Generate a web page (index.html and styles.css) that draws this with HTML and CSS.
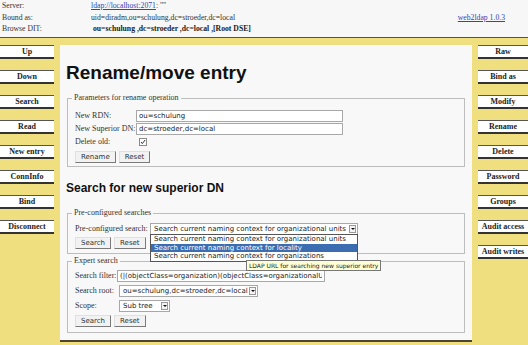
FILE: index.html
```html
<!DOCTYPE html>
<html lang="en">
<head>
    <meta charset="UTF-8">
    <title>web2ldap - Rename/move entry</title>
    <link rel="stylesheet" href="styles.css">
</head>
<body>
    <div class="top">
        <div class="info">
            <span>Server:</span>
            <span><a href="#">ldap://localhost:2071</a>: ""</span>
            <span>Bound as:</span>
            <span>uid=diradm,ou=schulung,dc=stroeder,dc=local</span>
            <span>Browse DIT:</span>
            <span class="dit">ou=schulung ,dc=stroeder ,dc=local ,[Root DSE]</span>
        </div>
        <a class="version" href="#">web2ldap 1.0.3</a>
    </div>

    <div class="layout">
        <div class="nav">
            <a href="#">Up</a>
            <a href="#">Down</a>
            <a href="#">Search</a>
            <a href="#">Read</a>
            <a href="#">New entry</a>
            <a href="#">ConnInfo</a>
            <a href="#">Bind</a>
            <a href="#">Disconnect</a>
        </div>

        <div class="main">
            <h1>Rename/move entry</h1>

            <fieldset class="fs rename">
                <legend>Parameters for rename operation</legend>
                <div class="row first">
                    <label>New RDN:</label>
                    <input class="field" type="text" value="ou=schulung">
                </div>
                <div class="row">
                    <label>New Superior DN:</label>
                    <input class="field" type="text" value="dc=stroeder,dc=local">
                </div>
                <div class="row">
                    <label>Delete old:</label>
                    <svg class="check" width="8" height="8" viewBox="0 0 8 8">
                        <rect x="0.5" y="0.5" width="7" height="7" fill="#fff" stroke="#8a8a8a"/>
                        <path d="M2 4 L3.3 5.6 L6.2 2" fill="none" stroke="#333" stroke-width="1"/>
                    </svg>
                </div>
                <div class="btns">
                    <button>Rename</button>
                    <button>Reset</button>
                </div>
            </fieldset>

            <h2>Search for new superior DN</h2>

            <fieldset class="fs pre">
                <legend>Pre-configured searches</legend>
                <div class="row first">
                    <label>Pre-configured search:</label>
                    <div class="select wide">
                        <span class="val">Search current naming context for organizational units</span>
                        <span class="arrow"></span>
                        <div class="dropdown">
                            <div>Search current naming context for organizational units</div>
                            <div class="hl">Search current naming context for locality</div>
                            <div>Search current naming context for organizations</div>
                        </div>
                        <div class="tip">LDAP URL for searching new superior entry</div>
                    </div>
                </div>
                <div class="btns">
                    <button>Search</button>
                    <button>Reset</button>
                </div>
            </fieldset>

            <fieldset class="fs expert">
                <legend>Expert search</legend>
                <div class="row first">
                    <label>Search filter:</label>
                    <input class="field" type="text" value="(|(objectClass=organization)(objectClass=organizationalUnit))">
                </div>
                <div class="row">
                    <label>Search root:</label>
                    <div class="select root">
                        <span class="val">ou=schulung,dc=stroeder,dc=local</span>
                        <span class="arrow"></span>
                    </div>
                </div>
                <div class="row">
                    <label>Scope:</label>
                    <div class="select scope">
                        <span class="val">Sub tree</span>
                        <span class="arrow"></span>
                    </div>
                </div>
                <div class="btns">
                    <button>Search</button>
                    <button>Reset</button>
                </div>
            </fieldset>
        </div>

        <div class="nav right">
            <a href="#">Raw</a>
            <a href="#">Bind as</a>
            <a href="#">Modify</a>
            <a href="#">Rename</a>
            <a href="#">Delete</a>
            <a href="#">Password</a>
            <a href="#">Groups</a>
            <a href="#">Audit access</a>
            <a href="#">Audit writes</a>
        </div>
    </div>
</body>
</html>
```

FILE: styles.css
```css
body {
    margin: 0;
    height: 345px;
    overflow: hidden;
    background-color: #efdf7e;
    font-family: "Liberation Serif", serif;
    color: #333;
}
a {
    color: #3344bb;
}

/* header */
.top {
    display: flex;
    justify-content: space-between;
    height: 37px;
    background-color: #f7f7f7;
    border-bottom: 1px solid #5b5337;
}
.info {
    display: grid;
    grid-template-columns: 89px auto;
    grid-auto-rows: 11.5px;
    padding-left: 2px;
    font-size: 7.7px;
    line-height: 11.5px;
}
.dit {
    padding-left: 2px;
    font-weight: bold;
    color: #222;
}
.version {
    margin: 11.5px 23px 0 0;
    font-size: 7.7px;
    line-height: 11.5px;
}

/* three columns */
.layout {
    display: flex;
    gap: 6px;
    padding-top: 7px;
}
.nav {
    width: 54px;
    display: flex;
    flex-direction: column;
    gap: 11px;
}
.nav.right {
    width: 50px;
}
.nav a {
    display: block;
    height: 11px;
    background-color: #fff;
    border-top: 1px solid #555;
    border-bottom: 2px solid #333;
    font: bold 8px/11px "Liberation Serif", serif;
    color: #222;
    text-align: center;
    text-decoration: none;
    white-space: nowrap;
}
.main {
    box-sizing: border-box;
    width: 412px;
    height: 297px;
    padding: 0 7px 0 6px;
    background-color: #f8f8f8;
    border-bottom: 2px solid #4c4631;
}
h1 {
    margin: 17px 0 0;
    font: bold 19px/22px "Liberation Sans", Arial, sans-serif;
    color: #111;
}
h2 {
    margin: 14px 0 0;
    font: bold 12px/14px "Liberation Sans", Arial, sans-serif;
    color: #111;
}

/* forms */
.fs {
    margin: 9px 0 0 1px;
    padding: 0 0 3px 7px;
    border: 1px solid #bdbdbd;
    font-size: 8px;
}
.fs legend {
    margin-left: -3px;
    padding: 0 2px;
    font-size: 8px;
    line-height: 10px;
}
.pre {
    margin-top: 13px;
    padding-bottom: 4px;
}
.expert {
    margin-top: 2px;
    padding-bottom: 5px;
}
.row {
    display: flex;
    align-items: center;
    height: 12px;
    margin-top: 1px;
}
.row.first {
    margin-top: 7px;
}
.pre .row.first {
    margin-top: 5px;
}
.expert .row {
    margin-top: 3px;
}
.expert .row.first {
    margin-top: 4px;
}
.row label {
    flex: none;
    line-height: 12px;
    white-space: nowrap;
}
.rename label {
    width: 61px;
}
.pre label {
    width: 75px;
}
.expert label {
    width: 42px;
}
.field {
    box-sizing: border-box;
    width: 207px;
    height: 12px;
    margin: 0;
    padding: 0 2px;
    border: 1px solid #a8a8a8;
    background-color: #fff;
    font: 7px "DejaVu Sans", sans-serif;
    color: #222;
}
.expert .field {
    width: 208px;
}
.check {
    margin-left: 3px;
}
.btns {
    display: flex;
    gap: 3px;
    margin-top: 3px;
}
.pre .btns {
    margin-top: 2px;
}
button {
    height: 12px;
    margin: 0;
    padding: 0 5px;
    background-color: #f2f2f2;
    border: 1px solid;
    border-color: #e0e0e0 #7a7a7a #7a7a7a #e0e0e0;
    font: 7px "DejaVu Sans", sans-serif;
    color: #333;
}

/* fake select boxes */
.select {
    position: relative;
    box-sizing: border-box;
    display: flex;
    align-items: center;
    height: 12px;
    padding: 0 1px 0 3px;
    border: 1px solid #a8a8a8;
    background-color: #fff;
    font: 7px "DejaVu Sans", sans-serif;
    color: #222;
}
.select .val {
    flex: 1;
    white-space: nowrap;
    overflow: hidden;
}
.select .arrow {
    position: relative;
    box-sizing: border-box;
    width: 7px;
    height: 8px;
    border: 1px solid #999;
    background-color: #f4f4f4;
}
.select .arrow::after {
    content: "";
    position: absolute;
    left: 1px;
    top: 2px;
    border-left: 2px solid transparent;
    border-right: 2px solid transparent;
    border-top: 2px solid #111;
}
.wide {
    width: 208px;
}
.root {
    width: 139px;
    margin-left: 2px;
}
.scope {
    width: 51px;
    margin-left: 2px;
}

/* open list and tooltip drawn over the form */
.dropdown {
    position: absolute;
    top: 10px;
    left: -1px;
    right: -1px;
    z-index: 2;
    border: 1px solid #555;
    background-color: #fff;
}
.dropdown div {
    padding-left: 3px;
    line-height: 8.7px;
    white-space: nowrap;
}
.dropdown .hl {
    background-color: #3b6db0;
    color: #fff;
}
.tip {
    position: absolute;
    left: 95px;
    top: 36px;
    z-index: 3;
    padding: 0 2px;
    border: 1px solid #777;
    background-color: #ffffd6;
    font: 6px/9px "DejaVu Sans", sans-serif;
    color: #222;
    white-space: nowrap;
}
```
